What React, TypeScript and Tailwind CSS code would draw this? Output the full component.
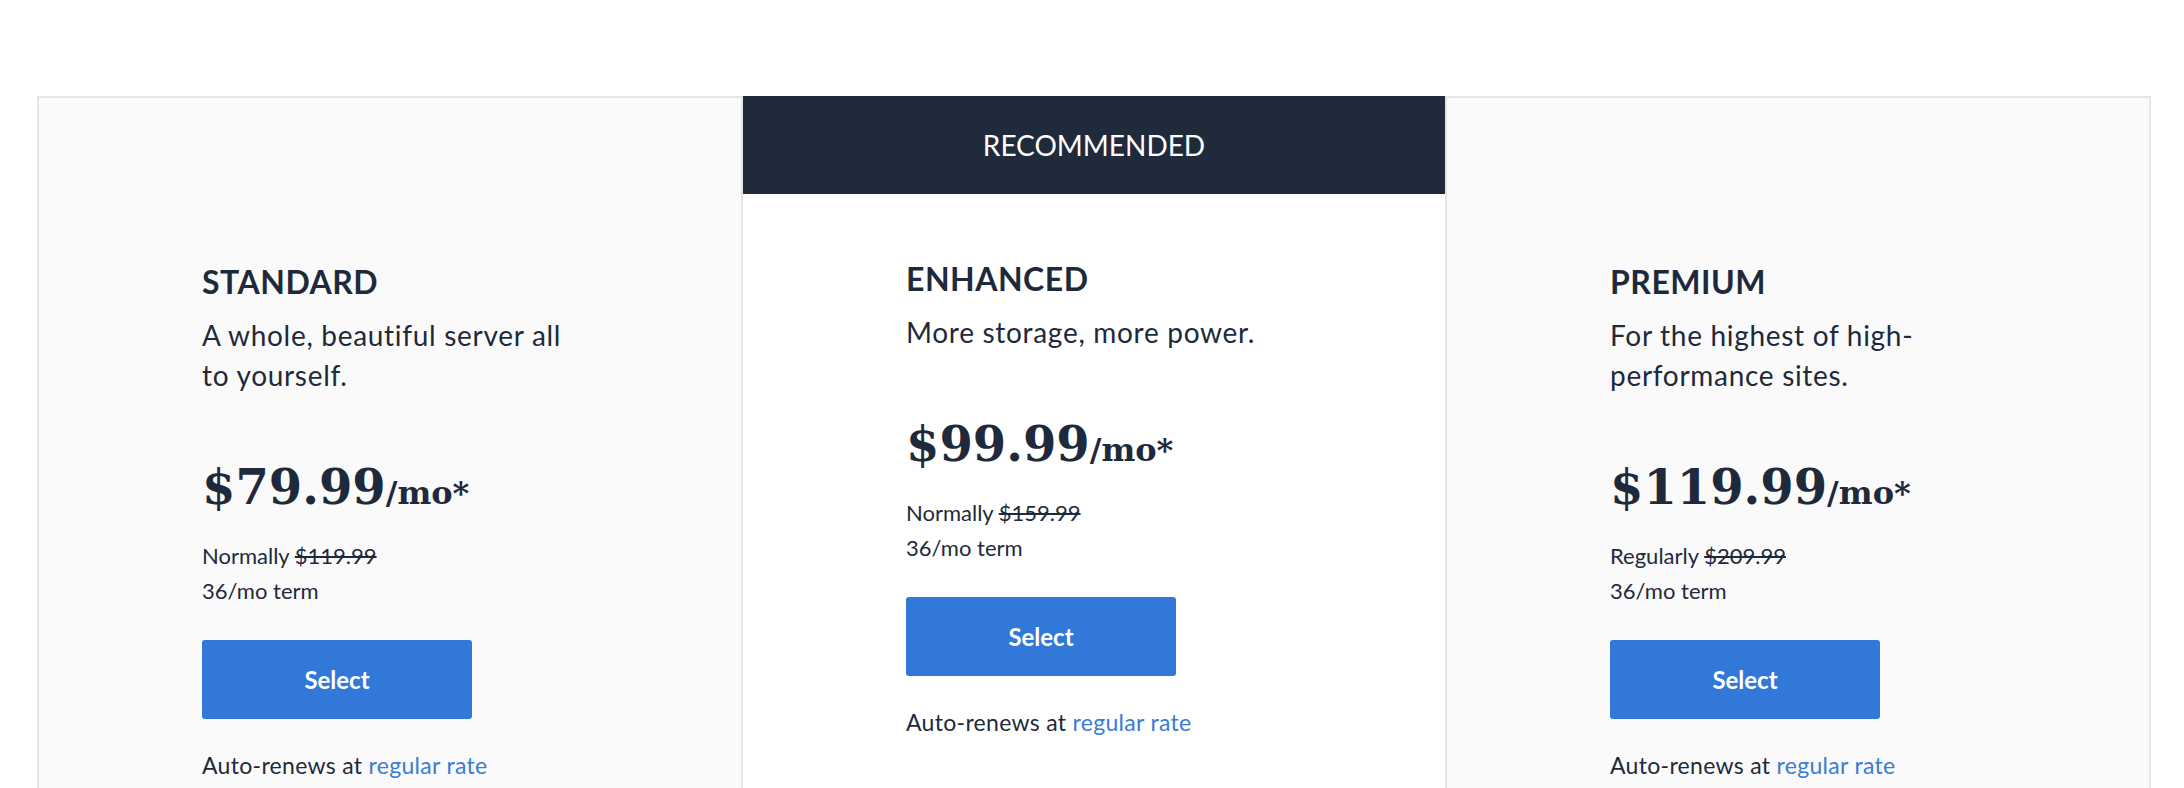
import React from "react";

type Plan = {
  name: string;
  blurb: string;
  price: string;
  oldLabel: string;
  oldPrice: string;
  recommended?: boolean;
};

const plans: Plan[] = [
  {
    name: "STANDARD",
    blurb: "A whole, beautiful server all to yourself.",
    price: "$79.99",
    oldLabel: "Normally",
    oldPrice: "$119.99",
  },
  {
    name: "ENHANCED",
    blurb: "More storage, more power.",
    price: "$99.99",
    oldLabel: "Normally",
    oldPrice: "$159.99",
    recommended: true,
  },
  {
    name: "PREMIUM",
    blurb: "For the highest of high-performance sites.",
    price: "$119.99",
    oldLabel: "Regularly",
    oldPrice: "$209.99",
  },
];

const PlanBody = ({ plan }: { plan: Plan }) => (
  <div className="pl-[163px] pr-[40px] text-[#1e2a3b]">
    <h3 className="text-[32px] leading-[38px] font-bold tracking-[0.5px]">{plan.name}</h3>
    <p className="mt-[14px] max-w-[385px] text-[28px] leading-[40px] tracking-[0.7px]">{plan.blurb}</p>
    <div className="mt-[64px] flex items-baseline font-['DejaVu_Serif',serif] font-bold leading-[56px]">
      <span className="text-[48px]">{plan.price}</span>
      <span className="text-[32px]">/mo*</span>
    </div>
    <p className="mt-[17px] text-[22px] leading-[35px]">
      {plan.oldLabel} <span className="line-through">{plan.oldPrice}</span>
    </p>
    <p className="text-[22px] leading-[35px]">36/mo term</p>
    <button className="mt-[32px] flex h-[79px] w-[270px] items-center justify-center rounded-[3px] bg-[#3178d9] text-[24px] font-bold text-white">
      Select
    </button>
    <p className="mt-[29px] text-[23px] leading-[35px] tracking-[0.3px]">
      Auto-renews at <a className="text-[#3a7bd5]">regular rate</a>
    </p>
  </div>
);

export default function App() {
  return (
    <div className="min-h-screen bg-white font-['Lato',sans-serif]">
      <div className="ml-[37px] mr-[33px] flex pt-[96px]">
        {plans.map((plan, i) =>
          plan.recommended ? (
            <div key={plan.name} className="flex-1 border-x-2 border-[#e6e6e6] bg-white pb-[80px]">
              <div className="flex h-[98px] items-center justify-center bg-[#1f2a3b] text-[28px] text-white">
                RECOMMENDED
              </div>
              <div className="pt-[66px]">
                <PlanBody plan={plan} />
              </div>
            </div>
          ) : (
            <div
              key={plan.name}
              className={`flex-1 border-t-2 border-[#e6e6e6] bg-[#fafafa] pb-[80px] pt-[165px] ${
                i === 0 ? "border-l-2" : "border-r-2"
              }`}
            >
              <PlanBody plan={plan} />
            </div>
          )
        )}
      </div>
    </div>
  );
}
